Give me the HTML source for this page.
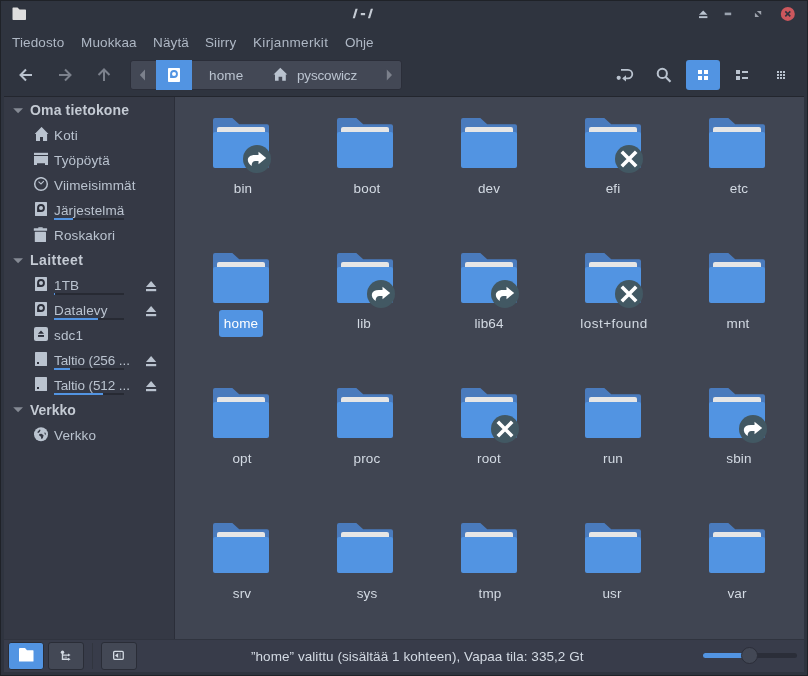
<!DOCTYPE html>
<html><head><meta charset="utf-8"><title>/ - /</title>
<style>
*{margin:0;padding:0;box-sizing:border-box}
html,body{width:808px;height:676px;overflow:hidden;background:#2f343f;font-family:"Liberation Sans",sans-serif}
.a{position:absolute;display:block}
.t{position:absolute;white-space:nowrap;will-change:transform}
</style></head><body>
<svg class="a" style="left:12px;top:7px;" width="15" height="14" viewBox="0 0 15 14"><path d="M0.5 1.2 Q0.5 0.5 1.2 0.5 H5.5 L7.5 2.5 H13.3 Q14 2.5 14 3.2 V12.3 Q14 13 13.3 13 H1.2 Q0.5 13 0.5 12.3 Z" fill="#dedede"/></svg>
<svg class="a" style="left:350px;top:6px;" width="26" height="16" viewBox="0 0 26 16"><path d="M2.7 12.2 H4.9 L7.7 2.7 H5.5 Z M17.9 12.2 H20.1 L23 2.7 H20.8 Z" fill="#c4cad3"/><rect x="10.8" y="7" width="4.3" height="2.2" fill="#c4cad3"/></svg>
<svg class="a" style="left:699px;top:10px;" width="9" height="9" viewBox="0 0 9 9"><path d="M4.2 0.5 L8.4 4.8 H0 Z" fill="#bac3cf"/><rect x="0" y="6.2" width="8.4" height="1.9" fill="#bac3cf"/></svg>
<svg class="a" style="left:724px;top:12px;" width="8" height="4" viewBox="0 0 8 4"><rect x="0.7" y="0.6" width="6.5" height="2.6" fill="#9aa2ae"/></svg>
<svg class="a" style="left:754px;top:10px;" width="8" height="8" viewBox="0 0 8 8"><path d="M2.8 1 H7.2 V4.9 Z M0.9 2.8 V7 H5.1 Z" fill="#9ea3ad"/></svg>
<svg class="a" style="left:780px;top:6px;" width="16" height="16" viewBox="0 0 16 16"><circle cx="7.8" cy="7.9" r="7" fill="#cc575d"/><path d="M5.3 5.4 L10.3 10.4 M10.3 5.4 L5.3 10.4" stroke="#2f343f" stroke-width="1.6"/></svg>
<div class="t" style="left:12px;top:36px;font-size:13.5px;line-height:13.5px;color:#afb8c5;font-weight:normal;letter-spacing:0.12999999999999998px;">Tiedosto</div>
<div class="t" style="left:81px;top:36px;font-size:13.5px;line-height:13.5px;color:#afb8c5;font-weight:normal;letter-spacing:0.12999999999999998px;">Muokkaa</div>
<div class="t" style="left:153px;top:36px;font-size:13.5px;line-height:13.5px;color:#afb8c5;font-weight:normal;letter-spacing:0.12999999999999998px;">Näytä</div>
<div class="t" style="left:205px;top:36px;font-size:13.5px;line-height:13.5px;color:#afb8c5;font-weight:normal;letter-spacing:0.07999999999999999px;">Siirry</div>
<div class="t" style="left:253px;top:36px;font-size:13.5px;line-height:13.5px;color:#afb8c5;font-weight:normal;letter-spacing:0.33000000000000007px;">Kirjanmerkit</div>
<div class="t" style="left:345px;top:36px;font-size:13.5px;line-height:13.5px;color:#afb8c5;font-weight:normal;letter-spacing:-0.01999999999999999px;">Ohje</div>
<svg class="a" style="left:19px;top:68px;" width="14" height="14" viewBox="0 0 14 14"><path d="M1.5 7 H13 M7 1.5 L1.5 7 L7 12.5" fill="none" stroke="#bac3cf" stroke-width="2"/></svg>
<svg class="a" style="left:58px;top:68px;" width="14" height="14" viewBox="0 0 14 14"><path d="M1 7 H12.5 M7 1.5 L12.5 7 L7 12.5" fill="none" stroke="#7c818c" stroke-width="2"/></svg>
<svg class="a" style="left:97px;top:68px;" width="14" height="14" viewBox="0 0 14 14"><path d="M7 13 V1.5 M1.5 7 L7 1.5 L12.5 7" fill="none" stroke="#7c818c" stroke-width="2"/></svg>
<div class="a" style="left:130px;top:60px;width:272px;height:30px;background:#434855;border:1px solid #2b2e39;border-radius:3px"></div>
<svg class="a" style="left:139px;top:69px;" width="8" height="12" viewBox="0 0 8 12"><path d="M6 0.5 V11.5 L0.8 6 Z" fill="#7c818c"/></svg>
<div class="a" style="left:156px;top:60px;width:36px;height:30px;background:#5294e2"></div>
<svg class="a" style="left:168px;top:68px;" width="12" height="14" viewBox="0 0 12 14"><rect x="0" y="0" width="12" height="14" rx="0.8" fill="#ffffff"/><path d="M2.1 10.1 L2.1 6 A3.9 3.9 0 1 1 6 9.9 Z" fill="#5294e2"/><circle cx="6" cy="6" r="2" fill="#ffffff"/></svg>
<div class="t" style="left:209px;top:69px;font-size:13.5px;line-height:13.5px;color:#bac3cf;font-weight:normal;letter-spacing:0.12999999999999998px;">home</div>
<svg class="a" style="left:273px;top:67px;" width="15" height="14" viewBox="0 0 15 14"><path d="M7.3 0.8 L14.3 7.6 H12.8 V13.8 H9.2 V9.8 H5.6 V13.8 H2 V7.6 H0.5 Z" fill="#bac3cf"/></svg>
<div class="t" style="left:297px;top:69px;font-size:13.5px;line-height:13.5px;color:#bac3cf;font-weight:normal;letter-spacing:-0.16999999999999998px;">pyscowicz</div>
<svg class="a" style="left:386px;top:69px;" width="8" height="12" viewBox="0 0 8 12"><path d="M0.8 0.5 V11.5 L6 6 Z" fill="#7c818c"/></svg>
<svg class="a" style="left:614px;top:66px;" width="22" height="18" viewBox="0 0 22 18"><circle cx="4.7" cy="11.8" r="2.1" fill="#bac3cf"/><path d="M7 3.8 H14 A4.3 4.3 0 0 1 14 12.4 H9.5" fill="none" stroke="#bac3cf" stroke-width="1.8"/><path d="M8.2 12.4 L12 9.3 V15.5 Z" fill="#bac3cf"/></svg>
<svg class="a" style="left:654px;top:66px;" width="20" height="20" viewBox="0 0 20 20"><circle cx="8.3" cy="7.4" r="4.6" fill="none" stroke="#bac3cf" stroke-width="2"/><path d="M11.5 10.7 L16.5 15.7" stroke="#bac3cf" stroke-width="2.2"/></svg>
<div class="a" style="left:686px;top:60px;width:34px;height:30px;background:#5294e2;border-radius:3px"></div>
<svg class="a" style="left:698px;top:70px;" width="10" height="10" viewBox="0 0 10 10"><rect x="0" y="0" width="4" height="4" fill="#fff"/><rect x="6" y="0" width="4" height="4" fill="#fff"/><rect x="0" y="6" width="4" height="4" fill="#fff"/><rect x="6" y="6" width="4" height="4" fill="#fff"/></svg>
<svg class="a" style="left:736px;top:70px;" width="12" height="10" viewBox="0 0 12 10"><rect x="0" y="0" width="4" height="4" fill="#bac3cf"/><rect x="0" y="6" width="4" height="4" fill="#bac3cf"/><rect x="6" y="1" width="6" height="2" fill="#bac3cf"/><rect x="6" y="7" width="6" height="2" fill="#bac3cf"/></svg>
<svg class="a" style="left:777px;top:71px;" width="8" height="8" viewBox="0 0 8 8"><rect x="0" y="0" width="2" height="2" fill="#bac3cf"/><rect x="3" y="0" width="2" height="2" fill="#bac3cf"/><rect x="6" y="0" width="2" height="2" fill="#bac3cf"/><rect x="0" y="3" width="2" height="2" fill="#bac3cf"/><rect x="3" y="3" width="2" height="2" fill="#bac3cf"/><rect x="6" y="3" width="2" height="2" fill="#bac3cf"/><rect x="0" y="6" width="2" height="2" fill="#bac3cf"/><rect x="3" y="6" width="2" height="2" fill="#bac3cf"/><rect x="6" y="6" width="2" height="2" fill="#bac3cf"/></svg>
<div class="a" style="left:4px;top:96px;width:800px;height:1px;background:#23262e"></div>
<div class="a" style="left:4px;top:97px;width:170px;height:542px;background:#353945"></div>
<div class="a" style="left:174px;top:97px;width:1px;height:542px;background:#2b2e39"></div>
<div class="a" style="left:175px;top:97px;width:629px;height:542px;background:#404552"></div>
<svg class="a" style="left:13px;top:108px;" width="11" height="6" viewBox="0 0 11 6"><path d="M0.2 0.2 H10 L5.1 5.3 Z" fill="#858a94"/></svg>
<div class="t" style="left:30px;top:103px;font-size:14px;line-height:14px;color:#c4cad3;font-weight:bold;letter-spacing:0.15px;">Oma tietokone</div>
<svg class="a" style="left:13px;top:258px;" width="11" height="6" viewBox="0 0 11 6"><path d="M0.2 0.2 H10 L5.1 5.3 Z" fill="#858a94"/></svg>
<div class="t" style="left:30px;top:253px;font-size:14px;line-height:14px;color:#c4cad3;font-weight:bold;letter-spacing:0.45000000000000007px;">Laitteet</div>
<svg class="a" style="left:13px;top:407px;" width="11" height="6" viewBox="0 0 11 6"><path d="M0.2 0.2 H10 L5.1 5.3 Z" fill="#858a94"/></svg>
<div class="t" style="left:30px;top:403px;font-size:14px;line-height:14px;color:#c4cad3;font-weight:bold;letter-spacing:0.0px;">Verkko</div>
<svg class="a" style="left:34px;top:127px;margin-top:0px" width="15" height="15" viewBox="0 0 15 15"><path d="M7.6 -0.1 L14.4 6.9 H13.1 V14 H9 V10 H6 V14 H2 V6.9 H0.7 Z" fill="#bac3cf"/></svg>
<div class="t" style="left:54px;top:129px;font-size:13.5px;line-height:13.5px;color:#bac3cf;font-weight:normal;letter-spacing:0.12999999999999998px;">Koti</div>
<svg class="a" style="left:34px;top:152px;" width="14" height="13" viewBox="0 0 14 13"><rect x="0" y="0.8" width="14" height="2.2" fill="#bac3cf"/><path d="M0 4 H14 V13 H11 V11.2 H3 V13 H0 Z" fill="#bac3cf"/></svg>
<div class="t" style="left:54px;top:154px;font-size:13.5px;line-height:13.5px;color:#bac3cf;font-weight:normal;letter-spacing:0.12999999999999998px;">Työpöytä</div>
<svg class="a" style="left:33px;top:177px;" width="16" height="16" viewBox="0 0 16 16"><circle cx="8" cy="7" r="6.3" fill="none" stroke="#bac3cf" stroke-width="1.5"/><path d="M5.5 4.7 L8 6.9 L10.8 4.2" fill="none" stroke="#bac3cf" stroke-width="1.1"/></svg>
<div class="t" style="left:54px;top:179px;font-size:13.5px;line-height:13.5px;color:#bac3cf;font-weight:normal;letter-spacing:0.12999999999999998px;">Viimeisimmät</div>
<svg class="a" style="left:35px;top:202px;" width="12" height="15" viewBox="0 0 12 15"><rect x="0" y="0" width="12" height="14" rx="0.6" fill="#bac3cf"/><path d="M2.1 10.1 L2.1 6 A3.9 3.9 0 1 1 6 9.9 Z" fill="#2b2e39"/><circle cx="6" cy="6" r="2" fill="#bac3cf"/></svg>
<div class="t" style="left:54px;top:204px;font-size:13.5px;line-height:13.5px;color:#bac3cf;font-weight:normal;letter-spacing:0.12999999999999998px;">Järjestelmä</div>
<svg class="a" style="left:33px;top:227px;" width="15" height="16" viewBox="0 0 15 16"><rect x="0.8" y="1.2" width="13.3" height="2.6" rx="0.4" fill="#bac3cf"/><rect x="5.2" y="0.3" width="4.6" height="1.5" rx="0.5" fill="#bac3cf"/><rect x="1.8" y="4.8" width="11.2" height="10.2" rx="0.6" fill="#bac3cf"/></svg>
<div class="t" style="left:54px;top:229px;font-size:13.5px;line-height:13.5px;color:#bac3cf;font-weight:normal;letter-spacing:0.12999999999999998px;">Roskakori</div>
<svg class="a" style="left:35px;top:277px;" width="12" height="15" viewBox="0 0 12 15"><rect x="0" y="0" width="12" height="14" rx="0.6" fill="#bac3cf"/><path d="M2.1 10.1 L2.1 6 A3.9 3.9 0 1 1 6 9.9 Z" fill="#2b2e39"/><circle cx="6" cy="6" r="2" fill="#bac3cf"/></svg>
<div class="t" style="left:54px;top:279px;font-size:13.5px;line-height:13.5px;color:#bac3cf;font-weight:normal;letter-spacing:0.12999999999999998px;">1TB</div>
<svg class="a" style="left:35px;top:302px;" width="12" height="15" viewBox="0 0 12 15"><rect x="0" y="0" width="12" height="14" rx="0.6" fill="#bac3cf"/><path d="M2.1 10.1 L2.1 6 A3.9 3.9 0 1 1 6 9.9 Z" fill="#2b2e39"/><circle cx="6" cy="6" r="2" fill="#bac3cf"/></svg>
<div class="t" style="left:54px;top:304px;font-size:13.5px;line-height:13.5px;color:#bac3cf;font-weight:normal;letter-spacing:0.12999999999999998px;">Datalevy</div>
<svg class="a" style="left:34px;top:327px;" width="14" height="14" viewBox="0 0 14 14"><rect x="0" y="0" width="14" height="14" rx="2" fill="#bac3cf"/><path d="M7 3.6 L10 6.8 H4 Z" fill="#2b2e39"/><rect x="4" y="8" width="6" height="1.9" fill="#2b2e39"/></svg>
<div class="t" style="left:54px;top:329px;font-size:13.5px;line-height:13.5px;color:#bac3cf;font-weight:normal;letter-spacing:0.12999999999999998px;">sdc1</div>
<svg class="a" style="left:35px;top:352px;" width="12" height="14" viewBox="0 0 12 14"><rect x="0" y="0" width="12" height="14" rx="0.6" fill="#bac3cf"/><rect x="2" y="10" width="2" height="2" fill="#2b2e39"/></svg>
<div class="t" style="left:54px;top:354px;font-size:13.5px;line-height:13.5px;color:#bac3cf;font-weight:normal;letter-spacing:-0.1px;">Taltio (256 ...</div>
<svg class="a" style="left:35px;top:377px;" width="12" height="14" viewBox="0 0 12 14"><rect x="0" y="0" width="12" height="14" rx="0.6" fill="#bac3cf"/><rect x="2" y="10" width="2" height="2" fill="#2b2e39"/></svg>
<div class="t" style="left:54px;top:379px;font-size:13.5px;line-height:13.5px;color:#bac3cf;font-weight:normal;letter-spacing:-0.1px;">Taltio (512 ...</div>
<svg class="a" style="left:34px;top:427px;" width="14" height="15" viewBox="0 0 14 15"><circle cx="7" cy="7.2" r="7" fill="#bac3cf"/><path d="M3.2 5.2 L5.6 2.5 L6.6 3 L5.8 4.8 L4.4 6 Z M5.3 7 L7.5 6.8 L9.6 8.2 L8.8 11.3 L7.3 12 L6.9 9.8 L5 8.2 Z M10.5 5.2 L11.8 5.9 L11.5 8.3 L10.6 7 Z" fill="#353945"/></svg>
<div class="t" style="left:54px;top:429px;font-size:13.5px;line-height:13.5px;color:#bac3cf;font-weight:normal;letter-spacing:0.12999999999999998px;">Verkko</div>
<div class="a" style="left:54px;top:218px;width:70px;height:2px;background:#272a33"></div>
<div class="a" style="left:54px;top:218px;width:19px;height:2px;background:#5294e2"></div>
<div class="a" style="left:54px;top:293px;width:70px;height:2px;background:#272a33"></div>
<div class="a" style="left:54px;top:293px;width:1px;height:2px;background:#5294e2"></div>
<div class="a" style="left:54px;top:318px;width:70px;height:2px;background:#272a33"></div>
<div class="a" style="left:54px;top:318px;width:44px;height:2px;background:#5294e2"></div>
<div class="a" style="left:54px;top:368px;width:70px;height:2px;background:#272a33"></div>
<div class="a" style="left:54px;top:368px;width:16px;height:2px;background:#5294e2"></div>
<div class="a" style="left:54px;top:393px;width:70px;height:2px;background:#272a33"></div>
<div class="a" style="left:54px;top:393px;width:49px;height:2px;background:#5294e2"></div>
<svg class="a" style="left:146px;top:281px;" width="11" height="11" viewBox="0 0 11 11"><path d="M5.1 0 L10.2 6 H0 Z" fill="#bac3cf"/><rect x="0" y="8" width="10.2" height="2.2" fill="#bac3cf"/></svg>
<svg class="a" style="left:146px;top:306px;" width="11" height="11" viewBox="0 0 11 11"><path d="M5.1 0 L10.2 6 H0 Z" fill="#bac3cf"/><rect x="0" y="8" width="10.2" height="2.2" fill="#bac3cf"/></svg>
<svg class="a" style="left:146px;top:356px;" width="11" height="11" viewBox="0 0 11 11"><path d="M5.1 0 L10.2 6 H0 Z" fill="#bac3cf"/><rect x="0" y="8" width="10.2" height="2.2" fill="#bac3cf"/></svg>
<svg class="a" style="left:146px;top:381px;" width="11" height="11" viewBox="0 0 11 11"><path d="M5.1 0 L10.2 6 H0 Z" fill="#bac3cf"/><rect x="0" y="8" width="10.2" height="2.2" fill="#bac3cf"/></svg>
<svg class="a" style="left:213px;top:118px;" width="56" height="50" viewBox="0 0 56 50"><path d="M0 2 Q0 0 2 0 H19.3 L26.2 6.2 H54 Q56 6.2 56 8.2 V20 H0 Z" fill="#4a7bbd"/><rect x="4" y="9" width="48" height="10" rx="2" fill="#e6e6e6"/><rect x="0" y="14" width="56" height="36" rx="2" fill="#5294e2"/></svg>
<svg class="a" style="left:243px;top:145px;" width="28" height="28" viewBox="0 0 28 28"><circle cx="14" cy="14" r="14" fill="#425863"/><path d="M8.6 21 C2.5 16.5 4 9.9 11.8 9.9 H15.5 V6.8 L23.2 13 L15.5 19.3 V16 H12.5 C10 16 8.7 17.6 8.6 21 Z" fill="#fff"/></svg>
<div class="t" style="left:242.5px;top:182px;font-size:13.5px;line-height:13.5px;color:#d3dae3;font-weight:normal;letter-spacing:0.12999999999999998px;transform:translateX(-50%)">bin</div>
<svg class="a" style="left:337px;top:118px;" width="56" height="50" viewBox="0 0 56 50"><path d="M0 2 Q0 0 2 0 H19.3 L26.2 6.2 H54 Q56 6.2 56 8.2 V20 H0 Z" fill="#4a7bbd"/><rect x="4" y="9" width="48" height="10" rx="2" fill="#e6e6e6"/><rect x="0" y="14" width="56" height="36" rx="2" fill="#5294e2"/></svg>
<div class="t" style="left:366.6px;top:182px;font-size:13.5px;line-height:13.5px;color:#d3dae3;font-weight:normal;letter-spacing:0.12999999999999998px;transform:translateX(-50%)">boot</div>
<svg class="a" style="left:461px;top:118px;" width="56" height="50" viewBox="0 0 56 50"><path d="M0 2 Q0 0 2 0 H19.3 L26.2 6.2 H54 Q56 6.2 56 8.2 V20 H0 Z" fill="#4a7bbd"/><rect x="4" y="9" width="48" height="10" rx="2" fill="#e6e6e6"/><rect x="0" y="14" width="56" height="36" rx="2" fill="#5294e2"/></svg>
<div class="t" style="left:489px;top:182px;font-size:13.5px;line-height:13.5px;color:#d3dae3;font-weight:normal;letter-spacing:0.12999999999999998px;transform:translateX(-50%)">dev</div>
<svg class="a" style="left:585px;top:118px;" width="56" height="50" viewBox="0 0 56 50"><path d="M0 2 Q0 0 2 0 H19.3 L26.2 6.2 H54 Q56 6.2 56 8.2 V20 H0 Z" fill="#4a7bbd"/><rect x="4" y="9" width="48" height="10" rx="2" fill="#e6e6e6"/><rect x="0" y="14" width="56" height="36" rx="2" fill="#5294e2"/></svg>
<svg class="a" style="left:615px;top:145px;" width="28" height="28" viewBox="0 0 28 28"><circle cx="14" cy="14" r="14" fill="#425863"/><path d="M6.8 6.8 L21.2 21.2 M21.2 6.8 L6.8 21.2" stroke="#fff" stroke-width="3.6"/></svg>
<div class="t" style="left:612.75px;top:182px;font-size:13.5px;line-height:13.5px;color:#d3dae3;font-weight:normal;letter-spacing:0.12999999999999998px;transform:translateX(-50%)">efi</div>
<svg class="a" style="left:709px;top:118px;" width="56" height="50" viewBox="0 0 56 50"><path d="M0 2 Q0 0 2 0 H19.3 L26.2 6.2 H54 Q56 6.2 56 8.2 V20 H0 Z" fill="#4a7bbd"/><rect x="4" y="9" width="48" height="10" rx="2" fill="#e6e6e6"/><rect x="0" y="14" width="56" height="36" rx="2" fill="#5294e2"/></svg>
<div class="t" style="left:738.5px;top:182px;font-size:13.5px;line-height:13.5px;color:#d3dae3;font-weight:normal;letter-spacing:0.12999999999999998px;transform:translateX(-50%)">etc</div>
<svg class="a" style="left:213px;top:253px;" width="56" height="50" viewBox="0 0 56 50"><path d="M0 2 Q0 0 2 0 H19.3 L26.2 6.2 H54 Q56 6.2 56 8.2 V20 H0 Z" fill="#4a7bbd"/><rect x="4" y="9" width="48" height="10" rx="2" fill="#e6e6e6"/><rect x="0" y="14" width="56" height="36" rx="2" fill="#5294e2"/></svg>
<div class="a" style="left:219px;top:310px;width:44px;height:27px;background:#5294e2;border-radius:3px"></div>
<div class="t" style="left:240.65px;top:317px;font-size:13.5px;line-height:13.5px;color:#ffffff;font-weight:normal;letter-spacing:0.12999999999999998px;transform:translateX(-50%)">home</div>
<svg class="a" style="left:337px;top:253px;" width="56" height="50" viewBox="0 0 56 50"><path d="M0 2 Q0 0 2 0 H19.3 L26.2 6.2 H54 Q56 6.2 56 8.2 V20 H0 Z" fill="#4a7bbd"/><rect x="4" y="9" width="48" height="10" rx="2" fill="#e6e6e6"/><rect x="0" y="14" width="56" height="36" rx="2" fill="#5294e2"/></svg>
<svg class="a" style="left:367px;top:280px;" width="28" height="28" viewBox="0 0 28 28"><circle cx="14" cy="14" r="14" fill="#425863"/><path d="M8.6 21 C2.5 16.5 4 9.9 11.8 9.9 H15.5 V6.8 L23.2 13 L15.5 19.3 V16 H12.5 C10 16 8.7 17.6 8.6 21 Z" fill="#fff"/></svg>
<div class="t" style="left:364.4px;top:317px;font-size:13.5px;line-height:13.5px;color:#d3dae3;font-weight:normal;letter-spacing:0.12999999999999998px;transform:translateX(-50%)">lib</div>
<svg class="a" style="left:461px;top:253px;" width="56" height="50" viewBox="0 0 56 50"><path d="M0 2 Q0 0 2 0 H19.3 L26.2 6.2 H54 Q56 6.2 56 8.2 V20 H0 Z" fill="#4a7bbd"/><rect x="4" y="9" width="48" height="10" rx="2" fill="#e6e6e6"/><rect x="0" y="14" width="56" height="36" rx="2" fill="#5294e2"/></svg>
<svg class="a" style="left:491px;top:280px;" width="28" height="28" viewBox="0 0 28 28"><circle cx="14" cy="14" r="14" fill="#425863"/><path d="M8.6 21 C2.5 16.5 4 9.9 11.8 9.9 H15.5 V6.8 L23.2 13 L15.5 19.3 V16 H12.5 C10 16 8.7 17.6 8.6 21 Z" fill="#fff"/></svg>
<div class="t" style="left:488.5px;top:317px;font-size:13.5px;line-height:13.5px;color:#d3dae3;font-weight:normal;letter-spacing:0.12999999999999998px;transform:translateX(-50%)">lib64</div>
<svg class="a" style="left:585px;top:253px;" width="56" height="50" viewBox="0 0 56 50"><path d="M0 2 Q0 0 2 0 H19.3 L26.2 6.2 H54 Q56 6.2 56 8.2 V20 H0 Z" fill="#4a7bbd"/><rect x="4" y="9" width="48" height="10" rx="2" fill="#e6e6e6"/><rect x="0" y="14" width="56" height="36" rx="2" fill="#5294e2"/></svg>
<svg class="a" style="left:615px;top:280px;" width="28" height="28" viewBox="0 0 28 28"><circle cx="14" cy="14" r="14" fill="#425863"/><path d="M6.8 6.8 L21.2 21.2 M21.2 6.8 L6.8 21.2" stroke="#fff" stroke-width="3.6"/></svg>
<div class="t" style="left:614.4px;top:317px;font-size:13.5px;line-height:13.5px;color:#d3dae3;font-weight:normal;letter-spacing:0.48px;transform:translateX(-50%)">lost+found</div>
<svg class="a" style="left:709px;top:253px;" width="56" height="50" viewBox="0 0 56 50"><path d="M0 2 Q0 0 2 0 H19.3 L26.2 6.2 H54 Q56 6.2 56 8.2 V20 H0 Z" fill="#4a7bbd"/><rect x="4" y="9" width="48" height="10" rx="2" fill="#e6e6e6"/><rect x="0" y="14" width="56" height="36" rx="2" fill="#5294e2"/></svg>
<div class="t" style="left:738px;top:317px;font-size:13.5px;line-height:13.5px;color:#d3dae3;font-weight:normal;letter-spacing:0.12999999999999998px;transform:translateX(-50%)">mnt</div>
<svg class="a" style="left:213px;top:388px;" width="56" height="50" viewBox="0 0 56 50"><path d="M0 2 Q0 0 2 0 H19.3 L26.2 6.2 H54 Q56 6.2 56 8.2 V20 H0 Z" fill="#4a7bbd"/><rect x="4" y="9" width="48" height="10" rx="2" fill="#e6e6e6"/><rect x="0" y="14" width="56" height="36" rx="2" fill="#5294e2"/></svg>
<div class="t" style="left:241.9px;top:452px;font-size:13.5px;line-height:13.5px;color:#d3dae3;font-weight:normal;letter-spacing:0.12999999999999998px;transform:translateX(-50%)">opt</div>
<svg class="a" style="left:337px;top:388px;" width="56" height="50" viewBox="0 0 56 50"><path d="M0 2 Q0 0 2 0 H19.3 L26.2 6.2 H54 Q56 6.2 56 8.2 V20 H0 Z" fill="#4a7bbd"/><rect x="4" y="9" width="48" height="10" rx="2" fill="#e6e6e6"/><rect x="0" y="14" width="56" height="36" rx="2" fill="#5294e2"/></svg>
<div class="t" style="left:366.7px;top:452px;font-size:13.5px;line-height:13.5px;color:#d3dae3;font-weight:normal;letter-spacing:0.12999999999999998px;transform:translateX(-50%)">proc</div>
<svg class="a" style="left:461px;top:388px;" width="56" height="50" viewBox="0 0 56 50"><path d="M0 2 Q0 0 2 0 H19.3 L26.2 6.2 H54 Q56 6.2 56 8.2 V20 H0 Z" fill="#4a7bbd"/><rect x="4" y="9" width="48" height="10" rx="2" fill="#e6e6e6"/><rect x="0" y="14" width="56" height="36" rx="2" fill="#5294e2"/></svg>
<svg class="a" style="left:491px;top:415px;" width="28" height="28" viewBox="0 0 28 28"><circle cx="14" cy="14" r="14" fill="#425863"/><path d="M6.8 6.8 L21.2 21.2 M21.2 6.8 L6.8 21.2" stroke="#fff" stroke-width="3.6"/></svg>
<div class="t" style="left:488.5px;top:452px;font-size:13.5px;line-height:13.5px;color:#d3dae3;font-weight:normal;letter-spacing:0.12999999999999998px;transform:translateX(-50%)">root</div>
<svg class="a" style="left:585px;top:388px;" width="56" height="50" viewBox="0 0 56 50"><path d="M0 2 Q0 0 2 0 H19.3 L26.2 6.2 H54 Q56 6.2 56 8.2 V20 H0 Z" fill="#4a7bbd"/><rect x="4" y="9" width="48" height="10" rx="2" fill="#e6e6e6"/><rect x="0" y="14" width="56" height="36" rx="2" fill="#5294e2"/></svg>
<div class="t" style="left:612.75px;top:452px;font-size:13.5px;line-height:13.5px;color:#d3dae3;font-weight:normal;letter-spacing:0.12999999999999998px;transform:translateX(-50%)">run</div>
<svg class="a" style="left:709px;top:388px;" width="56" height="50" viewBox="0 0 56 50"><path d="M0 2 Q0 0 2 0 H19.3 L26.2 6.2 H54 Q56 6.2 56 8.2 V20 H0 Z" fill="#4a7bbd"/><rect x="4" y="9" width="48" height="10" rx="2" fill="#e6e6e6"/><rect x="0" y="14" width="56" height="36" rx="2" fill="#5294e2"/></svg>
<svg class="a" style="left:739px;top:415px;" width="28" height="28" viewBox="0 0 28 28"><circle cx="14" cy="14" r="14" fill="#425863"/><path d="M8.6 21 C2.5 16.5 4 9.9 11.8 9.9 H15.5 V6.8 L23.2 13 L15.5 19.3 V16 H12.5 C10 16 8.7 17.6 8.6 21 Z" fill="#fff"/></svg>
<div class="t" style="left:738.5px;top:452px;font-size:13.5px;line-height:13.5px;color:#d3dae3;font-weight:normal;letter-spacing:0.12999999999999998px;transform:translateX(-50%)">sbin</div>
<svg class="a" style="left:213px;top:523px;" width="56" height="50" viewBox="0 0 56 50"><path d="M0 2 Q0 0 2 0 H19.3 L26.2 6.2 H54 Q56 6.2 56 8.2 V20 H0 Z" fill="#4a7bbd"/><rect x="4" y="9" width="48" height="10" rx="2" fill="#e6e6e6"/><rect x="0" y="14" width="56" height="36" rx="2" fill="#5294e2"/></svg>
<div class="t" style="left:242.4px;top:587px;font-size:13.5px;line-height:13.5px;color:#d3dae3;font-weight:normal;letter-spacing:0.12999999999999998px;transform:translateX(-50%)">srv</div>
<svg class="a" style="left:337px;top:523px;" width="56" height="50" viewBox="0 0 56 50"><path d="M0 2 Q0 0 2 0 H19.3 L26.2 6.2 H54 Q56 6.2 56 8.2 V20 H0 Z" fill="#4a7bbd"/><rect x="4" y="9" width="48" height="10" rx="2" fill="#e6e6e6"/><rect x="0" y="14" width="56" height="36" rx="2" fill="#5294e2"/></svg>
<div class="t" style="left:366.7px;top:587px;font-size:13.5px;line-height:13.5px;color:#d3dae3;font-weight:normal;letter-spacing:0.12999999999999998px;transform:translateX(-50%)">sys</div>
<svg class="a" style="left:461px;top:523px;" width="56" height="50" viewBox="0 0 56 50"><path d="M0 2 Q0 0 2 0 H19.3 L26.2 6.2 H54 Q56 6.2 56 8.2 V20 H0 Z" fill="#4a7bbd"/><rect x="4" y="9" width="48" height="10" rx="2" fill="#e6e6e6"/><rect x="0" y="14" width="56" height="36" rx="2" fill="#5294e2"/></svg>
<div class="t" style="left:490.25px;top:587px;font-size:13.5px;line-height:13.5px;color:#d3dae3;font-weight:normal;letter-spacing:0.12999999999999998px;transform:translateX(-50%)">tmp</div>
<svg class="a" style="left:585px;top:523px;" width="56" height="50" viewBox="0 0 56 50"><path d="M0 2 Q0 0 2 0 H19.3 L26.2 6.2 H54 Q56 6.2 56 8.2 V20 H0 Z" fill="#4a7bbd"/><rect x="4" y="9" width="48" height="10" rx="2" fill="#e6e6e6"/><rect x="0" y="14" width="56" height="36" rx="2" fill="#5294e2"/></svg>
<div class="t" style="left:612.25px;top:587px;font-size:13.5px;line-height:13.5px;color:#d3dae3;font-weight:normal;letter-spacing:0.12999999999999998px;transform:translateX(-50%)">usr</div>
<svg class="a" style="left:709px;top:523px;" width="56" height="50" viewBox="0 0 56 50"><path d="M0 2 Q0 0 2 0 H19.3 L26.2 6.2 H54 Q56 6.2 56 8.2 V20 H0 Z" fill="#4a7bbd"/><rect x="4" y="9" width="48" height="10" rx="2" fill="#e6e6e6"/><rect x="0" y="14" width="56" height="36" rx="2" fill="#5294e2"/></svg>
<div class="t" style="left:736.75px;top:587px;font-size:13.5px;line-height:13.5px;color:#d3dae3;font-weight:normal;letter-spacing:0.12999999999999998px;transform:translateX(-50%)">var</div>
<div class="a" style="left:4px;top:639px;width:800px;height:33px;background:#383c4a;border-top:1px solid #30343f"></div>
<div class="a" style="left:8px;top:642px;width:36px;height:28px;background:#5294e2;border:1px solid #2a2d37;border-radius:3px"></div>
<svg class="a" style="left:19px;top:648px;" width="15" height="14" viewBox="0 0 15 14"><path d="M0 1 Q0 0 1 0 H6 L8 2.2 H14 Q14.5 2.2 14.5 3 V13 Q14.5 13.5 14 13.5 H0.5 Q0 13.5 0 13 Z" fill="#fff"/></svg>
<div class="a" style="left:48px;top:642px;width:36px;height:28px;background:#434855;border:1px solid #2a2d37;border-radius:3px"></div>
<div class="a" style="left:92px;top:643px;width:1px;height:26px;background:#31353f"></div>
<div class="a" style="left:101px;top:642px;width:36px;height:28px;background:#434855;border:1px solid #2a2d37;border-radius:3px"></div>
<svg class="a" style="left:60px;top:650px;" width="12" height="12" viewBox="0 0 12 12"><circle cx="2.5" cy="2.3" r="1.7" fill="#d3dae3"/><path d="M2.5 2.3 V9.3 H8.5 M2.8 5.1 H8.5" fill="none" stroke="#d3dae3" stroke-width="1.4"/><path d="M4.5 7.2 H7" stroke="#d3dae3" stroke-width="1" opacity="0.7"/><path d="M8 3.6 L10.6 5.1 L8 6.6 Z M8 7.8 L10.6 9.3 L8 10.8 Z" fill="#d3dae3"/></svg>
<svg class="a" style="left:112px;top:650px;" width="13" height="11" viewBox="0 0 13 11"><rect x="1.65" y="1.45" width="9.6" height="7.9" rx="1" fill="none" stroke="#d3dae3" stroke-width="1.3"/><path d="M3 5.5 L6.2 3 V8 Z" fill="#d3dae3"/><rect x="7.4" y="2.5" width="1.6" height="6" fill="#d3dae3" opacity="0.25"/></svg>
<div class="t" style="left:251px;top:650px;font-size:13.5px;line-height:13.5px;color:#d3dae3;font-weight:normal;letter-spacing:0.060000000000000026px;">”home” valittu (sisältää 1 kohteen), Vapaa tila: 335,2 Gt</div>
<div class="a" style="left:703px;top:653px;width:94px;height:5px;background:#2b2e39;border-radius:3px"></div>
<div class="a" style="left:703px;top:653px;width:46px;height:5px;background:#5294e2;border-radius:3px 0 0 3px"></div>
<div class="a" style="left:741px;top:647px;width:17px;height:17px;background:#434855;border:1px solid #2b2e39;border-radius:50%"></div>
<div class="a" style="left:0;top:0;width:808px;height:676px;border:1px solid #1f2228"></div>
</body></html>
